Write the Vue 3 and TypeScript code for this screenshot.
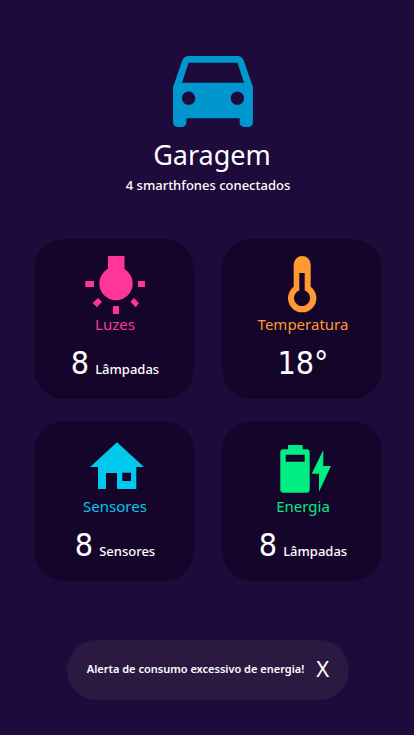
<script setup lang="ts">
import { ref } from 'vue'

type CardKind = 'lights' | 'temperature' | 'sensors' | 'energy'

interface Card {
  kind: CardKind
  title: string
  value: string
  unit?: string
}

const cards: Card[] = [
  { kind: 'lights', title: 'Luzes', value: '8', unit: 'Lâmpadas' },
  { kind: 'temperature', title: 'Temperatura', value: '18°' },
  { kind: 'sensors', title: 'Sensores', value: '8', unit: 'Sensores' },
  { kind: 'energy', title: 'Energia', value: '8', unit: 'Lâmpadas' },
]

const alertOpen = ref(true)
</script>

<template>
  <main class="page">
    <header class="room">
      <svg class="car" viewBox="3 4 18 16" aria-hidden="true">
        <path fill-rule="evenodd" d="M18.92 5.01C18.72 4.42 18.16 4 17.5 4h-11c-.66 0-1.21.42-1.42 1.01L3 11v8c0 .55.45 1 1 1h1c.55 0 1-.45 1-1v-1h12v1c0 .55.45 1 1 1h1c.55 0 1-.45 1-1v-8l-2.08-5.99zM6.5 15c-.83 0-1.5-.67-1.5-1.5S5.67 12 6.5 12s1.5.67 1.5 1.5S7.33 15 6.5 15zm11 0c-.83 0-1.5-.67-1.5-1.5s.67-1.5 1.5-1.5 1.5.67 1.5 1.5-.67 1.5-1.5 1.5zM5 10l1.5-4.5h11L19 10H5z" />
      </svg>
      <h1 class="room-name">Garagem</h1>
      <p class="room-info">4 smarthfones conectados</p>
    </header>

    <section class="cards">
      <article v-for="card in cards" :key="card.kind" class="card" :class="card.kind">
        <svg v-if="card.kind === 'lights'" class="icon" viewBox="0 0 60 60" aria-hidden="true">
          <path d="M23 1h16.500v14H23zM.3 26H9v6H.3zM53 26h7v6h-7zM28 51h6v8h-6zM13 43l4 3.700-5 5.600-4.300-4.300zM49 43l5 5.300-3.500 4-5-5.600z" />
          <circle cx="31" cy="28.500" r="16.700" />
        </svg>
        <svg v-else-if="card.kind === 'temperature'" class="icon" viewBox="-14 -1 60 60" aria-hidden="true">
          <path fill-rule="evenodd" d="M6.700 8.500a8.500 8.500 0 0 1 17 0V30.800a14.200 14.200 0 1 1-17 0zM12.300 17V34.500a8 8 0 1 0 5.400 0V17z" />
        </svg>
        <svg v-else-if="card.kind === 'sensors'" class="icon" viewBox="-5 -5 60 60" aria-hidden="true">
          <path fill-rule="evenodd" d="M27 .3L54 25h-7.700v22H27V31H16v16H8V25H0zM32.300 30.700V39H41v-8.300z" />
        </svg>
        <svg v-else class="icon" viewBox="-7 -8 60 60" aria-hidden="true">
          <path fill-rule="evenodd" d="M8 0h14.700v4.300h4a3 3 0 0 1 3 3v37.400a3 3 0 0 1-3 3H3.300a3 3 0 0 1-3-3V7.300a3 3 0 0 1 3-3H8zM5.700 9.700v7h19v-7zM43.300 5v16H51L39 46.700v-18h-7.300z" />
        </svg>
        <h2 class="title">{{ card.title }}</h2>
        <p class="reading">
          <span class="value">{{ card.value }}</span>
          <span v-if="card.unit" class="unit">{{ card.unit }}</span>
        </p>
      </article>
    </section>

    <div v-if="alertOpen" class="alert" role="alert">
      <span class="message">Alerta de consumo excessivo de energia!</span>
      <button class="close" type="button" @click="alertOpen = false">X</button>
    </div>
  </main>
</template>

<style>
body {
  margin: 0;
  background: #1e0b3c;
}
</style>

<style scoped>
.page {
  box-sizing: border-box;
  min-height: 100vh;
  padding: 56px 16px 35px 18px;
  display: flex;
  flex-direction: column;
  align-items: center;
  background: #1e0b3c;
  color: #fff;
  font-family: "Noto Sans", Tahoma, sans-serif;
}

.room {
  display: flex;
  flex-direction: column;
  align-items: center;
}

.car {
  width: 80px;
  height: 71px;
  margin-left: 10px;
  fill: #0097cf;
}

.room-name {
  margin: 10px 0 0;
  padding-left: 8px;
  font-size: 27px;
  font-weight: 400;
  line-height: 36px;
}

.room-info {
  margin: 4px 0 0;
  font-size: 13px;
  font-weight: 500;
  line-height: 16px;
}

.cards {
  display: grid;
  grid-template-columns: repeat(2, 160px);
  gap: 22px 28px;
  margin-top: 46px;
}

.card {
  box-sizing: border-box;
  height: 160px;
  padding: 16px 0 0 2px;
  border-radius: 30px;
  background: #16052b;
  display: flex;
  flex-direction: column;
  align-items: center;
}

.icon {
  width: 60px;
  height: 60px;
  fill: currentColor;
}

.title {
  margin: 0;
  font-size: 15px;
  font-weight: 400;
  line-height: 18px;
}

.reading {
  margin: 10px 0 0;
  display: flex;
  align-items: baseline;
  gap: 6px;
  color: #fff;
}

.value {
  font-family: "DejaVu Sans Condensed", "DejaVu Sans", Tahoma, sans-serif;
  font-stretch: condensed;
  font-size: 32px;
  line-height: 40px;
}

.unit {
  font-size: 13px;
  font-weight: 500;
}

.lights {
  color: #ff3699;
}

.temperature {
  color: #ff9931;
}

.sensors {
  color: #00c9ed;
}

.energy {
  color: #00ed83;
}

.alert {
  box-sizing: border-box;
  height: 60px;
  margin-top: 59px;
  padding: 0 20px 4px;
  border-radius: 30px;
  background: #2c1942;
  display: flex;
  align-items: center;
  gap: 12px;
}

.message {
  font-size: 11px;
  font-weight: 600;
}

.close {
  padding: 0;
  border: 0;
  background: none;
  color: inherit;
  font: inherit;
  font-size: 22px;
  line-height: 28px;
  cursor: pointer;
}
</style>
